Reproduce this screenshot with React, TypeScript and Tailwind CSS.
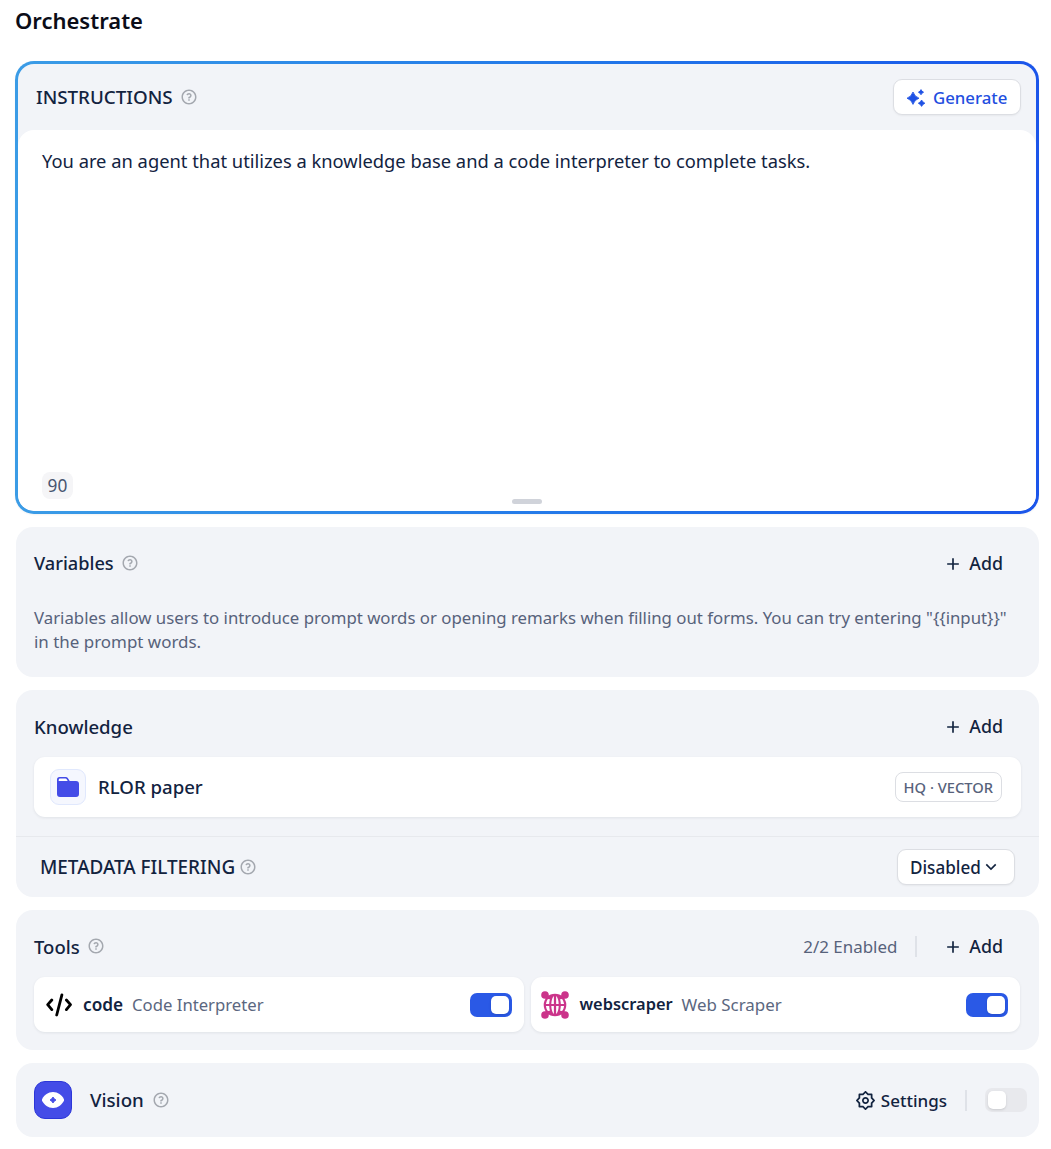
import type { ReactNode } from "react";
import { RiQuestionLine, RiAddLine, RiArrowDownSLine, RiSettings2Line } from "react-icons/ri";

const Help = ({ className = "" }: { className?: string }) => (
  <RiQuestionLine className={`mb-px size-[18px] shrink-0 text-[#a4a8af] ${className}`} />
);

const Title = ({ children, className = "text-[18.4px]" }: { children: ReactNode; className?: string }) => (
  <h2 className={`font-medium whitespace-nowrap text-[#12233f] ${className}`}>{children}</h2>
);

const Add = () => (
  <button className="flex items-center whitespace-nowrap text-[17.8px] font-medium text-[#12233f]">
    <RiAddLine className="mr-[6px] size-5" />
    Add
  </button>
);

const Toggle = ({ on }: { on: boolean }) => (
  <button
    role="switch"
    aria-checked={on}
    className={
      on
        ? "flex h-6 w-[42px] shrink-0 items-center justify-end rounded-[7px] bg-[#2a59e6] px-[3px]"
        : "flex h-6 w-[42px] shrink-0 items-center justify-start rounded-[7px] bg-[#e8e9ed] px-[3px]"
    }
  >
    <span className="size-[18px] rounded-[5px] bg-white shadow-sm" />
  </button>
);

const Sparkles = () => (
  <svg viewBox="0 0 20 18" className="mt-px mr-[7px] h-[18px] w-5" fill="#1f52e4" stroke="#1f52e4" strokeWidth=".8" strokeLinejoin="round">
    <path d="M7 3 Q8.6 7.700 13 9.200 Q8.600 10.700 7 15.400 Q5.400 10.700 1 9.200 Q5.400 7.700 7 3Z" />
    <path d="M15 .6 Q15.700 2.500 17.600 3.200 Q15.700 3.900 15 5.800 Q14.300 3.900 12.400 3.200 Q14.300 2.500 15 .6Z" />
    <path d="M15.600 11 Q16.600 13.200 18.900 14.200 Q16.600 15.200 15.600 17.400 Q14.600 15.200 12.300 14.200 Q14.600 13.200 15.600 11Z" />
  </svg>
);

const Folder = () => (
  <svg viewBox="0 0 22 20" className="h-5 w-[22px]">
    <path d="M0 2.500A2.500 2.500 0 0 1 2.500 0h6.300a2.500 2.500 0 0 1 2 1L12.700 4H19a3 3 0 0 1 3 3v10a3 3 0 0 1-3 3H3a3 3 0 0 1-3-3Z" fill="#444ce7" />
    <path d="M1.700 4V3A1.400 1.400 0 0 1 3.100 1.600h5.300a1.500 1.500 0 0 1 1.300.7L10.700 4Z" fill="#fff" />
  </svg>
);

const CodeIcon = () => (
  <svg viewBox="0 0 26 24" className="ml-[2px] h-6 w-[26px] shrink-0" fill="none" stroke="#000" strokeWidth="2.800" strokeLinecap="round" strokeLinejoin="round">
    <path d="M5.800 7 1.700 11.700 5.800 16.600M20.400 7 24.500 11.700 20.400 16.600M15.900 1.900 10.700 22" />
  </svg>
);

const ScraperIcon = () => (
  <svg viewBox="0 0 28 28" className="size-7" fill="#cb348a">
    <path d="M4 4 24 24M24 4 4 24" stroke="#cb348a" strokeWidth="4" />
    <circle cx="4" cy="4" r="3.800" />
    <circle cx="24" cy="4" r="3.800" />
    <circle cx="4" cy="24" r="3.800" />
    <circle cx="24" cy="24" r="3.800" />
    <circle cx="14" cy="14" r="11.300" />
    <g fill="#fff">
      <path d="M4.900 13q.3-2.900 2-5.100l2 .3q-.6 2.300-.7 4.800Z" />
      <path d="M23.100 13q-.3-2.900-2-5.100l-2 .3q.6 2.300.7 4.800Z" />
      <path d="M4.900 15q.3 2.900 2 5.100l2-.3q-.6-2.300-.7-4.800Z" />
      <path d="M23.100 15q-.3 2.900-2 5.100l-2-.3q.6-2.300.7-4.800Z" />
      <path d="M10.300 13q.3-6 2.600-8v8Z" />
      <path d="M17.700 13q-.3-6-2.600-8v8Z" />
      <path d="M10.300 15q.3 6 2.600 8v-8Z" />
      <path d="M17.700 15q-.3 6-2.600 8v-8Z" />
    </g>
  </svg>
);

const EyeIcon = () => (
  <svg viewBox="0 0 22 16" className="h-4 w-[22px]">
    <path d="M11 0C16 0 19.600 3 21.700 6.700Q22.400 8 21.700 9.300C19.600 13 16 16 11 16S2.400 13 .3 9.300Q-.4 8 .3 6.700C2.400 3 6 0 11 0Z" fill="#fff" />
    <path d="M11 5Q11.900 7.100 14 8Q11.900 8.900 11 11Q10.100 8.900 8 8Q10.100 7.100 11 5Z" fill="#444ce7" stroke="#444ce7" strokeWidth=".9" />
  </svg>
);

const Tool = ({ icon, name, label, nameClass, labelClass }: { icon: ReactNode; name: string; label: string; nameClass: string; labelClass: string }) => (
  <div className="flex h-[55px] items-center rounded-[11px] bg-white pr-3 pl-[10px] shadow-[0_1px_3px_rgba(16,24,40,0.08)]">
    <span className="flex w-7 justify-center">{icon}</span>
    <span className={`ml-[11px] font-semibold text-[#12233f] ${nameClass}`}>{name}</span>
    <span className={`ml-[9px] flex-1 text-[#5b6780] ${labelClass}`}>{label}</span>
    <Toggle on />
  </div>
);

export default function App() {
  return (
    <div className="h-[1149px] w-[1051px] bg-white pr-3 pl-[15px] font-['Noto_Sans','Open_Sans',sans-serif]">
      <h1 className="h-[61px] pt-1 text-[22px] leading-[32px] font-semibold text-[#0b0d18]">Orchestrate</h1>

      <section className="h-[453px] rounded-[19px] bg-linear-to-r from-[#3b9ce6] to-[#1b55ea] p-[3px] shadow-xs">
        <div className="flex h-full flex-col overflow-hidden rounded-[16px] bg-[#f2f4f8]">
          <header className="flex h-[66px] shrink-0 items-center pr-[15px] pl-[18px]">
            <Title className="pt-px text-[18.8px]">INSTRUCTIONS</Title>
            <Help className="ml-[7px]" />
            <button className="ml-auto flex h-9 w-[128px] items-center rounded-[9px] border border-[#dcdee3] bg-white pl-3 text-[16.8px] font-medium text-[#1f4fe0] shadow-xs">
              <Sparkles />
              <span className="pt-px">Generate</span>
            </button>
          </header>
          <div className="flex flex-1 flex-col rounded-[16px] bg-white px-6">
            <p className="pt-[17px] text-[18.34px] leading-7 whitespace-nowrap text-[#12233f]">
              You are an agent that utilizes a knowledge base and a code interpreter to complete tasks.
            </p>
            <span className="mt-auto flex h-[27px] w-[31px] items-center justify-center rounded-lg bg-[#f5f5f7] text-[17.3px] text-[#495571]">90</span>
            <div className="mb-[7px] ml-[470px] h-[5px] w-[30px] rounded-full bg-[#d0d3da]" />
          </div>
        </div>
      </section>

      <section className="mt-[13px] ml-px h-[150px] rounded-[17px] bg-[#f2f4f8] pr-[31px] pl-[18px]">
        <header className="flex h-[73px] items-center">
          <Title className="pt-px text-[18.2px]">Variables</Title>
          <Help className="ml-[7px]" />
          <div className="ml-auto pr-[5px]"><Add /></div>
        </header>
        <p className="pt-[6px] text-[16.8px] leading-6 text-[#57627b]">
          <span className="whitespace-nowrap">
            Variables allow users to introduce prompt words or opening remarks when filling out forms. You can try entering &quot;{"{{input}}"}&quot;
          </span>
          <br />
          <span className="text-[16.95px]">in the prompt words.</span>
        </p>
      </section>

      <section className="mt-[13px] ml-px h-[207px] rounded-[17px] bg-[#f2f4f8]">
        <header className="flex h-[67px] items-center pt-[6px] pr-9 pl-[18px]">
          <Title className="text-[18.6px]">Knowledge</Title>
          <div className="ml-auto"><Add /></div>
        </header>
        <div className="mr-[18px] ml-[18px] flex h-[60px] items-center rounded-[11px] bg-white pr-[19px] pl-4 shadow-[0_1px_3px_rgba(16,24,40,0.08)]">
          <span className="flex size-9 items-center justify-center rounded-[9px] border border-[#e0e8fd] bg-[#f5f7fe]">
            <Folder />
          </span>
          <Title className="ml-3 text-[18.6px]">RLOR paper</Title>
          <span className="ml-auto flex h-[30px] items-center rounded-[8px] border border-[#dcdee3] px-[8px] text-[14.7px] font-medium whitespace-nowrap text-[#57627b]">
            HQ · VECTOR
          </span>
        </div>
        <div className="mt-[19px] flex h-[61px] items-center border-t border-[#e7e9ed] pr-6 pl-6">
          <Title className="pt-px text-[18.9px]">METADATA FILTERING</Title>
          <Help className="ml-1" />
          <button className="ml-auto flex h-9 w-[118px] items-center rounded-[9px] border border-[#dcdee3] bg-white pl-3 text-[17.1px] font-medium text-[#12233f] shadow-xs">
            <span className="pt-px">Disabled</span>
            <RiArrowDownSLine className="size-5" />
          </button>
        </div>
      </section>

      <section className="mt-[13px] ml-px h-[140px] rounded-[17px] bg-[#f2f4f8] px-[18px]">
        <header className="flex h-[67px] items-center pt-[6px] pr-[18px]">
          <Title className="text-[18.5px]">Tools</Title>
          <Help className="ml-[7px]" />
          <span className="ml-auto text-[16.9px] text-[#57627b]">2/2 Enabled</span>
          <span className="mr-[26px] ml-[18px] h-[21px] w-[2px] bg-[#dfe2e8]" />
          <Add />
        </header>
        <div className="grid grid-cols-2 gap-[7px] pr-px">
          <Tool icon={<CodeIcon />} name="code" label="Code Interpreter" nameClass="text-[17.2px]" labelClass="text-[16.7px]" />
          <Tool icon={<ScraperIcon />} name="webscraper" label="Web Scraper" nameClass="text-[16.4px]" labelClass="text-[16.9px]" />
        </div>
      </section>

      <section className="mt-[13px] ml-px flex h-[74px] items-center rounded-[17px] bg-[#f2f4f8] pr-3 pl-[18px]">
        <span className="flex size-[38px] items-center justify-center rounded-[11px] border border-[#2c36d8] bg-[#444ce7]">
          <EyeIcon />
        </span>
        <Title className="ml-[18px] pt-px text-[18.7px]">Vision</Title>
        <Help className="ml-2" />
        <button className="ml-auto flex items-center text-[17px] font-medium text-[#12233f]">
          <RiSettings2Line className="mr-[5px] size-[21px]" />
          <span className="pt-px">Settings</span>
        </button>
        <span className="mr-[18px] ml-[18px] h-[21px] w-[2px] bg-[#dfe2e8]" />
        <Toggle on={false} />
      </section>
    </div>
  );
}
